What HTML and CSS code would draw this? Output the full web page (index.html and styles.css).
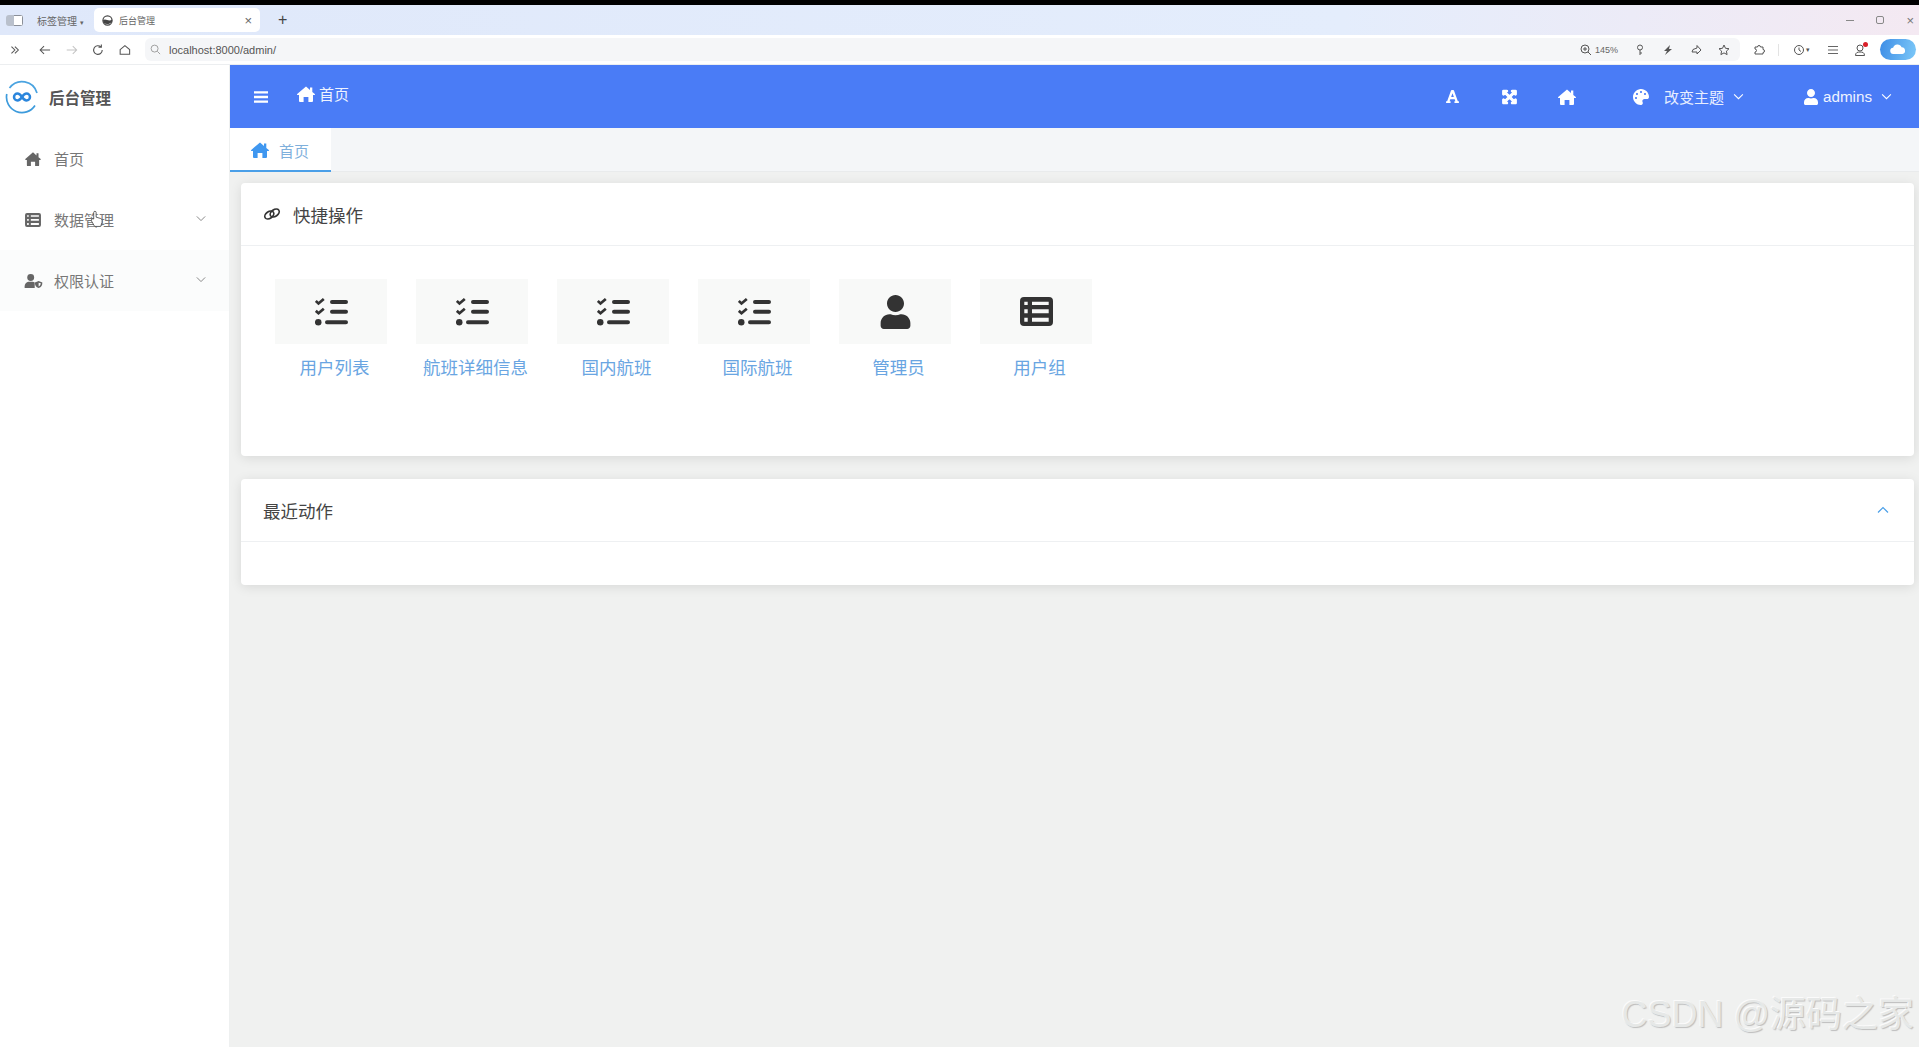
FILE: index.html
```html
<!DOCTYPE html>
<html lang="en">
<head>
    <meta charset="UTF-8">
    <meta name="viewport" content="width=device-width, initial-scale=1.0">
    <title>后台管理</title>
    <link rel="stylesheet" href="styles.css">
</head>
<body>
    <svg class="sprites" xmlns="http://www.w3.org/2000/svg">
        <symbol id="i-home" viewBox="0 0 18 16"><path d="M9 .4l4 3.500V1.500h2.300v4.400L17.800 8c.4.400.1 1-.4 1H16v6a1 1 0 0 1-1 1h-3.600v-5H6.600v5H3a1 1 0 0 1-1-1V9H.6c-.5 0-.8-.6-.4-1z"/></symbol>
        <symbol id="i-user" viewBox="0 0 448 512"><path d="M224 256c70.7 0 128-57.3 128-128S294.7 0 224 0 96 57.3 96 128s57.3 128 128 128zm89.6 32h-16.7c-22.2 10.2-46.9 16-72.9 16s-50.6-5.8-72.9-16h-16.7C60.2 288 0 348.2 0 422.4V464c0 26.5 21.5 48 48 48h352c26.5 0 48-21.5 48-48v-41.6c0-74.2-60.2-134.4-134.4-134.4z"/></symbol>
        <symbol id="i-font" viewBox="0 0 448 512"><path d="M432 416h-23.41L277.88 53.69A32 32 0 0 0 247.58 32h-47.16a32 32 0 0 0-30.3 21.69L39.41 416H16a16 16 0 0 0-16 16v32a16 16 0 0 0 16 16h128a16 16 0 0 0 16-16v-32a16 16 0 0 0-16-16h-19.58l23.3-64h152.56l23.3 64H304a16 16 0 0 0-16 16v32a16 16 0 0 0 16 16h128a16 16 0 0 0 16-16v-32a16 16 0 0 0-16-16zM176.85 272L224 142.51 271.15 272z"/></symbol>
        <symbol id="i-expand" viewBox="-20 -10 488 532"><path stroke="currentColor" stroke-width="42" d="M448 344v112a23.94 23.94 0 0 1-24 24H312c-21.39 0-32.09-25.9-17-41l36.2-36.2L224 295.6 116.77 402.9 153 439c15.09 15.1 4.39 41-17 41H24a23.94 23.94 0 0 1-24-24V344c0-21.4 25.89-32.1 41-17l36.19 36.2L184.46 256 77.18 148.7 41 185c-15.1 15.1-41 4.4-41-17V56a23.94 23.94 0 0 1 24-24h112c21.39 0 32.09 25.9 17 41l-36.2 36.2L224 216.4l107.23-107.3L295 73c-15.09-15.1-4.39-41 17-41h112a23.94 23.94 0 0 1 24 24v112c0 21.4-25.89 32.1-41 17l-36.19-36.2L263.54 256l107.28 107.3L407 327.1c15.1-15.2 41-4.5 41 16.9z"/></symbol>
        <symbol id="i-palette" viewBox="0 0 512 512"><path d="M204.3 5C104.9 24.4 24.8 104.3 5.2 203.4c-37 187 131.7 326.4 258.8 306.7 41.2-6.4 61.4-54.6 42.5-91.7-23.1-45.4 9.9-98.4 60.9-98.4h79.7c35.8 0 64.8-29.6 64.9-65.3C511.5 97.1 368.1-26.9 204.3 5zM96 320c-17.7 0-32-14.3-32-32s14.3-32 32-32 32 14.3 32 32-14.3 32-32 32zm32-128c-17.7 0-32-14.3-32-32s14.3-32 32-32 32 14.3 32 32-14.3 32-32 32zm128-64c-17.7 0-32-14.3-32-32s14.3-32 32-32 32 14.3 32 32-14.3 32-32 32zm128 64c-17.7 0-32-14.3-32-32s14.3-32 32-32 32 14.3 32 32-14.3 32-32 32z"/></symbol>
        <symbol id="i-tasks" viewBox="0 0 33 28">
            <path d="M.8 3l2.700 2.500L8.800 1M.8 12.800l2.700 2.500 5.300-4.600" fill="none" stroke="currentColor" stroke-width="2.700"/>
            <circle cx="3.200" cy="24.200" r="3.300"/>
            <path d="M17 4h14M17 13.700h14M12 24.200h19" fill="none" stroke="currentColor" stroke-width="4" stroke-linecap="round"/>
        </symbol>
        <symbol id="i-table" viewBox="0 0 33 29"><path fill-rule="evenodd" d="M4 0h25a4 4 0 0 1 4 4v21a4 4 0 0 1-4 4H4a4 4 0 0 1-4-4V4a4 4 0 0 1 4-4zM4.300 4.700V8h3.400V4.700zM12 4.700V8h16.700V4.700zM4.300 12.300v4h3.400v-4zM12 12.300v4h16.700v-4zM4.300 20.700v4h3.400v-4zM12 20.700v4h16.700v-4z"/></symbol>
        <symbol id="i-link" viewBox="0 0 18 14">
            <g fill="none" stroke="currentColor" stroke-width="1.700">
                <ellipse cx="6.300" cy="8" rx="5" ry="3.300" transform="rotate(-35 6.300 8)"/>
                <ellipse cx="11.700" cy="6" rx="5" ry="3.300" transform="rotate(-35 11.700 6)"/>
            </g>
        </symbol>
        <symbol id="i-usershield" viewBox="0 0 19 15">
            <circle cx="6.500" cy="3.700" r="3.700"/>
            <path d="M0 15v-1.600C0 10.400 2.300 8.400 5 8.400h3.400c1 0 1.800.3 2.400.7V15z"/>
            <path fill-rule="evenodd" d="M15 7.600l4 1.400c0 3-1 5-4 6-3-1-4-3-4-6zM15 9.400v4c1.300-.6 2.200-1.800 2.300-3.400z"/>
        </symbol>
        <symbol id="i-chev" viewBox="0 0 12 8"><path d="M1 1.500l5 5 5-5" fill="none" stroke="currentColor" stroke-width="1.200"/></symbol>
    </svg>

    <div class="black-edge"></div>

    <div class="tab-strip">
        <div class="group-btn"><span></span><span></span></div>
        <div class="group-name">标签管理 <small>▾</small></div>
        <div class="browser-tab">
            <svg class="favicon" viewBox="0 0 12 12"><circle cx="6" cy="6" r="5" fill="none" stroke="#444" stroke-width="1.300"/><path d="M1 6c3-3 6 2 10-1v2c-3 4-7 3-9 2z" fill="#444"/></svg>
            <span class="tab-title">后台管理</span>
            <span class="tab-close">×</span>
        </div>
        <span class="new-tab">+</span>
        <div class="win-controls">
            <span class="win-min"></span>
            <span class="win-max"></span>
            <span class="win-close">×</span>
        </div>
    </div>

    <div class="address-row">
        <div class="nav-btns">
            <svg viewBox="0 0 16 16"><path d="M4 4l4 4-4 4M8 4l4 4-4 4" fill="none" stroke="#555" stroke-width="1.200"/></svg>
            <svg viewBox="0 0 16 16"><path d="M14 8H3M7 3.500L2.500 8 7 12.500" fill="none" stroke="#555" stroke-width="1.200"/></svg>
            <svg viewBox="0 0 16 16"><path d="M2 8h11M9 3.500L13.500 8 9 12.500" fill="none" stroke="#c4c4c4" stroke-width="1.200"/></svg>
            <svg viewBox="0 0 16 16"><path d="M13 8a5 5 0 1 1-1.500-3.500M12 1.500v3.300H8.700" fill="none" stroke="#555" stroke-width="1.300"/></svg>
            <svg viewBox="0 0 16 16"><path d="M2.500 7.500L8 3l5.500 4.500V13h-11z" fill="none" stroke="#555" stroke-width="1.200"/></svg>
        </div>
        <div class="url-bar">
            <svg class="url-search" viewBox="0 0 12 12"><circle cx="5" cy="5" r="3.800" fill="none" stroke="#999"/><path d="M8 8l3 3" stroke="#999"/></svg>
            <span class="url-text">localhost:8000/admin/</span>
            <div class="url-tools">
                <svg class="zoom-ico" viewBox="0 0 12 12"><circle cx="5" cy="5" r="4" fill="none" stroke="#555"/><path d="M8 8l3 3M3 5h4M5 3v4" stroke="#555"/></svg>
                <span class="zoom-val">145%</span>
                <svg class="first-tool" viewBox="0 0 12 12"><circle cx="6" cy="3.500" r="2.500" fill="none" stroke="#555"/><path d="M6 6v5M6 9h2" stroke="#555"/></svg>
                <svg viewBox="0 0 12 12"><path d="M8 1L2 7h3l-2 4 7-6H7z" fill="#555"/></svg>
                <svg viewBox="0 0 12 12"><path d="M7 1.500L11 6 7 10V8H2l1-2.500L7 4z" fill="none" stroke="#555"/></svg>
                <svg viewBox="0 0 12 12"><path d="M6 1l1.500 3.300 3.500.4-2.600 2.400.7 3.500L6 8.900l-3.100 1.700.7-3.500L1 4.700l3.500-.4z" fill="none" stroke="#555"/></svg>
            </div>
        </div>
        <div class="browser-tools">
            <svg class="ext" viewBox="0 0 12 12"><path d="M2 3h2.500a1.500 1.500 0 0 1 3 0H10v2.500a1.500 1.500 0 0 1 0 3V10H2V8a1.500 1.500 0 0 0 0-3z" fill="none" stroke="#555"/></svg>
            <span class="tool-sep"></span>
            <svg class="hist" viewBox="0 0 12 12"><circle cx="6" cy="6" r="4.500" fill="none" stroke="#555"/><path d="M6 3.500V6l2 1.500" fill="none" stroke="#555"/></svg>
            <small class="hist-arrow">▾</small>
            <svg class="menu-ico" viewBox="0 0 12 12"><path d="M1 2.500h10M1 6h10M1 9.500h10" stroke="#666"/></svg>
            <span class="acct">
                <svg viewBox="0 0 12 12"><circle cx="6" cy="4" r="3" fill="none" stroke="#555"/><path d="M1.500 11.500c0-3 2-3.500 4.500-3.500s4.500.5 4.500 3.500z" fill="none" stroke="#555"/></svg>
                <i></i>
            </span>
            <span class="cloud-pill">
                <svg viewBox="0 0 18 12"><path d="M4 11a3.500 3.500 0 0 1-.5-7A5 5 0 0 1 13 3.500 3.800 3.800 0 0 1 14 11z" fill="#fff"/></svg>
            </span>
        </div>
    </div>

    <div class="app">
        <aside class="sidebar">
            <div class="brand">
                <svg class="logo" viewBox="0 0 34 34">
                    <path d="M4.500 8A15.500 15.500 0 0 1 32 13" fill="none" stroke="#4aa3e0" stroke-width="1.700"/>
                    <path d="M1.800 14A15.500 15.500 0 0 0 30 25.500" fill="none" stroke="#3d9bdc" stroke-width="1.700"/>
                    <path d="M17 17c-1.500-2.300-3-3.500-4.500-3.500a3.500 3.500 0 0 0 0 7c1.500 0 3-1.200 4.500-3.500s3-3.500 4.500-3.500a3.500 3.500 0 0 1 0 7c-1.500 0-3-1.200-4.500-3.500z" fill="none" stroke="#2b86dc" stroke-width="2.500"/>
                </svg>
                <span class="brand-name">后台管理</span>
            </div>
            <nav class="menu">
                <a class="menu-item"><svg class="menu-icon"><use href="#i-home"/></svg><span>首页</span></a>
                <a class="menu-item"><svg class="menu-icon"><use href="#i-table"/></svg><span>数据管理</span><svg class="menu-chev"><use href="#i-chev"/></svg></a>
                <a class="menu-item hovered"><svg class="menu-icon wide"><use href="#i-usershield"/></svg><span>权限认证</span><svg class="menu-chev"><use href="#i-chev"/></svg></a>
            </nav>
            <svg class="cursor" viewBox="0 0 14 18"><path d="M4 9V2a1.300 1.300 0 0 1 2.600 0v5l5 1.500c1 .3 1.400 1 1.400 2v2L11.500 17H5L1.500 11c-.8-1.400.8-2.600 2.500-2z" fill="#fff" stroke="#444" stroke-width=".9"/></svg>
        </aside>

        <main class="main">
            <header class="topnav">
                <svg class="bars" viewBox="0 0 14 12"><path d="M0 1.300h14M0 6h14M0 10.700h14" stroke="#fff" stroke-width="2.300"/></svg>
                <svg class="crumb-home"><use href="#i-home"/></svg>
                <span class="crumb-text">首页</span>
                <div class="nav-right">
                    <span class="nav-icon"><svg class="ico-font"><use href="#i-font"/></svg></span>
                    <span class="nav-icon"><svg class="ico-expand"><use href="#i-expand"/></svg></span>
                    <span class="nav-icon"><svg class="ico-home"><use href="#i-home"/></svg></span>
                    <span class="nav-theme">
                        <svg class="ico-palette"><use href="#i-palette"/></svg>
                        <span class="theme-text">改变主题</span>
                        <svg class="nav-chev"><use href="#i-chev"/></svg>
                    </span>
                    <span class="nav-user">
                        <svg class="ico-user"><use href="#i-user"/></svg>
                        <span class="user-text">admins</span>
                        <svg class="nav-chev"><use href="#i-chev"/></svg>
                    </span>
                </div>
            </header>

            <div class="page-tabs">
                <div class="page-tab">
                    <svg class="page-tab-icon"><use href="#i-home"/></svg>
                    <span>首页</span>
                </div>
            </div>

            <div class="content">
                <section class="card quick">
                    <div class="card-head">
                        <svg class="head-icon"><use href="#i-link"/></svg>
                        <span>快捷操作</span>
                    </div>
                    <div class="quick-list">
                        <a class="quick-item"><div class="quick-box"><svg class="ico-tasks"><use href="#i-tasks"/></svg></div><span>用户列表</span></a>
                        <a class="quick-item"><div class="quick-box"><svg class="ico-tasks"><use href="#i-tasks"/></svg></div><span>航班详细信息</span></a>
                        <a class="quick-item"><div class="quick-box"><svg class="ico-tasks"><use href="#i-tasks"/></svg></div><span>国内航班</span></a>
                        <a class="quick-item"><div class="quick-box"><svg class="ico-tasks"><use href="#i-tasks"/></svg></div><span>国际航班</span></a>
                        <a class="quick-item"><div class="quick-box"><svg class="ico-person"><use href="#i-user"/></svg></div><span>管理员</span></a>
                        <a class="quick-item"><div class="quick-box"><svg class="ico-table"><use href="#i-table"/></svg></div><span>用户组</span></a>
                    </div>
                </section>

                <section class="card recent">
                    <div class="card-head">
                        <span>最近动作</span>
                        <svg class="collapse"><use href="#i-chev"/></svg>
                    </div>
                </section>
            </div>
        </main>
    </div>

    <div class="watermark">CSDN @源码之家</div>
</body>
</html>
```

FILE: styles.css
```css
* {
    box-sizing: border-box;
}
html, body {
    height: 100%;
}
body {
    margin: 0;
    display: flex;
    flex-direction: column;
    overflow: hidden;
    font-family: "Liberation Sans", "Noto Sans CJK SC", sans-serif;
    background-color: #fff;
}
svg {
    display: block;
    fill: currentColor;
}
.sprites {
    display: none;
}
.black-edge {
    height: 5px;
    background-color: #000;
}

/* browser chrome */
.tab-strip {
    height: 30px;
    display: flex;
    align-items: center;
    padding-left: 6px;
    background: linear-gradient(90deg, #dfe8fa 0%, #e4edfc 70%, #f4e9f2 100%);
    color: #555;
}
.group-btn {
    display: flex;
    width: 17px;
    height: 11px;
    border-radius: 3px;
    overflow: hidden;
}
.group-btn span {
    flex: 1;
    background-color: #b9c0cc;
}
.group-btn span + span {
    background-color: #fff;
    border: 1px solid #8a8f98;
    border-left: 0;
}
.group-name {
    width: 71px;
    padding-left: 14px;
    font-size: 10px;
    color: #666;
    white-space: nowrap;
}
.group-name small {
    font-size: 7px;
}
.browser-tab {
    width: 166px;
    height: 24px;
    display: flex;
    align-items: center;
    padding: 0 8px;
    background-color: #fff;
    border-radius: 5px;
}
.favicon {
    width: 11px;
    height: 11px;
}
.tab-title {
    margin-left: 6px;
    font-size: 9px;
    color: #666;
}
.tab-close {
    margin-left: auto;
    font-size: 13px;
    color: #666;
}
.new-tab {
    margin-left: 18px;
    font-size: 16px;
    color: #444;
}
.win-controls {
    margin-left: auto;
    display: flex;
    align-items: center;
    gap: 22px;
    padding-right: 5px;
    color: #777;
}
.win-min {
    width: 8px;
    height: 1px;
    background-color: #888;
}
.win-max {
    width: 8px;
    height: 8px;
    border: 1px solid #888;
    border-radius: 2px;
}
.win-close {
    font-size: 13px;
    line-height: 13px;
}
.address-row {
    height: 30px;
    display: flex;
    align-items: center;
    border-bottom: 1px solid #eceef0;
    background-color: #fff;
}
.nav-btns {
    width: 145px;
    display: flex;
    align-items: center;
    padding-left: 8px;
}
.nav-btns svg {
    width: 14px;
    height: 14px;
    margin-right: 13px;
}
.nav-btns svg:first-child {
    margin-right: 16px;
}
.url-bar {
    width: 1595px;
    height: 23px;
    display: flex;
    align-items: center;
    padding: 0 10px 0 5px;
    background-color: #f5f6f8;
    border-radius: 6px;
}
.url-search {
    width: 11px;
    height: 11px;
}
.url-text {
    margin-left: 8px;
    font-size: 11px;
    color: #555;
}
.url-tools {
    margin-left: auto;
    display: flex;
    align-items: center;
}
.url-tools svg {
    width: 12px;
    height: 12px;
    margin-left: 16px;
}
.url-tools .zoom-ico {
    margin: 0 3px 0 0;
}
.zoom-val {
    font-size: 9px;
    color: #666;
}
.browser-tools {
    flex: 1;
    display: flex;
    align-items: center;
}
.browser-tools svg {
    width: 12px;
    height: 12px;
}
.ext {
    margin-left: 13px;
}
.tool-sep {
    width: 1px;
    height: 12px;
    margin-left: 13px;
    background-color: #e3e3e3;
}
.hist {
    margin-left: 14px;
}
.hist-arrow {
    margin-left: 1px;
    font-size: 7px;
    color: #555;
}
.browser-tools .menu-ico {
    margin-left: 17px;
}
.acct {
    position: relative;
    margin-left: 15px;
}
.acct i {
    position: absolute;
    top: -2px;
    right: -2px;
    width: 5px;
    height: 5px;
    border-radius: 50%;
    background-color: #d9202a;
}
.cloud-pill {
    width: 36px;
    height: 21px;
    margin-left: 14px;
    display: flex;
    align-items: center;
    justify-content: center;
    border-radius: 11px;
    background: linear-gradient(100deg, #3d8de6, #7cc8f8);
}
.browser-tools .cloud-pill svg {
    width: 16px;
    height: 11px;
}

/* app */
.app {
    flex: 1;
    display: flex;
    min-height: 0;
}
.sidebar {
    position: relative;
    width: 230px;
    flex-shrink: 0;
    background-color: #fff;
    border-right: 1px solid #eef0f0;
}
.brand {
    height: 63px;
    display: flex;
    align-items: center;
    padding-left: 5px;
}
.logo {
    width: 34px;
    height: 34px;
}
.brand-name {
    margin-left: 10px;
    font-size: 15.500px;
    font-weight: bold;
    color: #555;
}
.menu-item {
    height: 61px;
    display: flex;
    align-items: center;
    padding: 0 23px 0 25px;
    font-size: 15px;
    color: #777;
}
.menu-item.hovered {
    background-color: #fbfcfc;
}
.menu-icon {
    width: 16px;
    height: 14px;
    margin-right: 13px;
    color: #666;
}
.menu-icon.wide {
    width: 19px;
    margin-left: -1px;
    margin-right: 11px;
}
.menu-chev {
    width: 10px;
    height: 7px;
    margin-left: auto;
    margin-top: -3px;
    color: #888;
}
.cursor {
    position: absolute;
    left: 90px;
    top: 145px;
    width: 13px;
    height: 18px;
}
.main {
    flex: 1;
    min-width: 0;
    display: flex;
    flex-direction: column;
    background-color: #f0f1f0;
}
.topnav {
    height: 63px;
    flex-shrink: 0;
    display: flex;
    align-items: center;
    padding: 0 27px 0 24px;
    background-color: #4a7cf6;
    color: #fff;
}
.bars {
    width: 14px;
    height: 12px;
}
.crumb-home {
    width: 18px;
    height: 16px;
    margin: -5px 0 0 29px;
}
.crumb-text {
    margin: -6px 0 0 4px;
    font-size: 15px;
    color: #eef3ff;
}
.nav-right {
    margin-left: auto;
    display: flex;
    align-items: center;
}
.nav-icon {
    width: 57px;
    display: flex;
    justify-content: center;
}
.ico-font {
    width: 13px;
    height: 15px;
}
.ico-expand {
    width: 15px;
    height: 16px;
}
.ico-home {
    width: 18px;
    height: 16px;
}
.nav-theme {
    display: flex;
    align-items: center;
    margin-left: 38px;
}
.ico-palette {
    width: 16px;
    height: 16px;
}
.theme-text {
    margin-left: 15px;
    font-size: 15px;
    color: #e8eeff;
}
.nav-chev {
    width: 11px;
    height: 7px;
    margin-left: 9px;
}
.nav-user {
    display: flex;
    align-items: center;
    margin-left: 60px;
}
.ico-user {
    width: 14px;
    height: 16px;
}
.user-text {
    margin-left: 5px;
    font-size: 15.200px;
    color: #eef3ff;
}
.nav-user .nav-chev {
    margin-left: 9px;
}
.page-tabs {
    height: 44px;
    flex-shrink: 0;
    background-color: #f4f6f8;
    border-bottom: 1px solid #e9ebec;
}
.page-tab {
    width: 101px;
    height: 44px;
    display: flex;
    align-items: center;
    padding: 2px 0 0 21px;
    background-color: #fff;
    border-bottom: 2px solid #4a9fe8;
    font-size: 15px;
    color: #7fb0dc;
}
.page-tab-icon {
    width: 18px;
    height: 16px;
    margin-right: 10px;
    color: #3f97f0;
}
.content {
    flex: 1;
    padding: 11px 5px 0 11px;
}
.card {
    background-color: #fff;
    border-radius: 4px;
    box-shadow: 0 2px 12px rgba(0,0,0,0.1);
}
.quick {
    height: 273px;
    margin-bottom: 23px;
}
.recent {
    height: 106px;
}
.card-head {
    height: 63px;
    display: flex;
    align-items: center;
    padding: 0 25px 0 22px;
    border-bottom: 1px solid #eef0f2;
    font-size: 17.500px;
    color: #444;
}
.head-icon {
    width: 18px;
    height: 14px;
    margin-right: 12px;
    color: #333;
}
.collapse {
    width: 12px;
    height: 8px;
    margin-left: auto;
    transform: rotate(180deg);
    color: #4a9fe8;
}
.quick-list {
    display: flex;
    padding: 33px 0 0 23px;
}
.quick-item {
    width: 141px;
    font-size: 17.500px;
    color: #69a5e2;
    text-align: center;
}
.quick-box {
    width: 112px;
    height: 65px;
    margin: 0 0 10px 11px;
    display: flex;
    align-items: center;
    justify-content: center;
    background-color: #f8f9f8;
    color: #333;
}
.ico-tasks {
    width: 33px;
    height: 28px;
}
.ico-person {
    width: 31px;
    height: 34px;
}
.ico-table {
    width: 33px;
    height: 29px;
}
.watermark {
    position: absolute;
    right: 5px;
    bottom: 12px;
    font-size: 36px;
    line-height: 40px;
    color: #e6e8e7;
    text-shadow: -1px -1px 0 #fbfbfb, 1px 1px 1px #bdbdbd;
    white-space: nowrap;
}
```
